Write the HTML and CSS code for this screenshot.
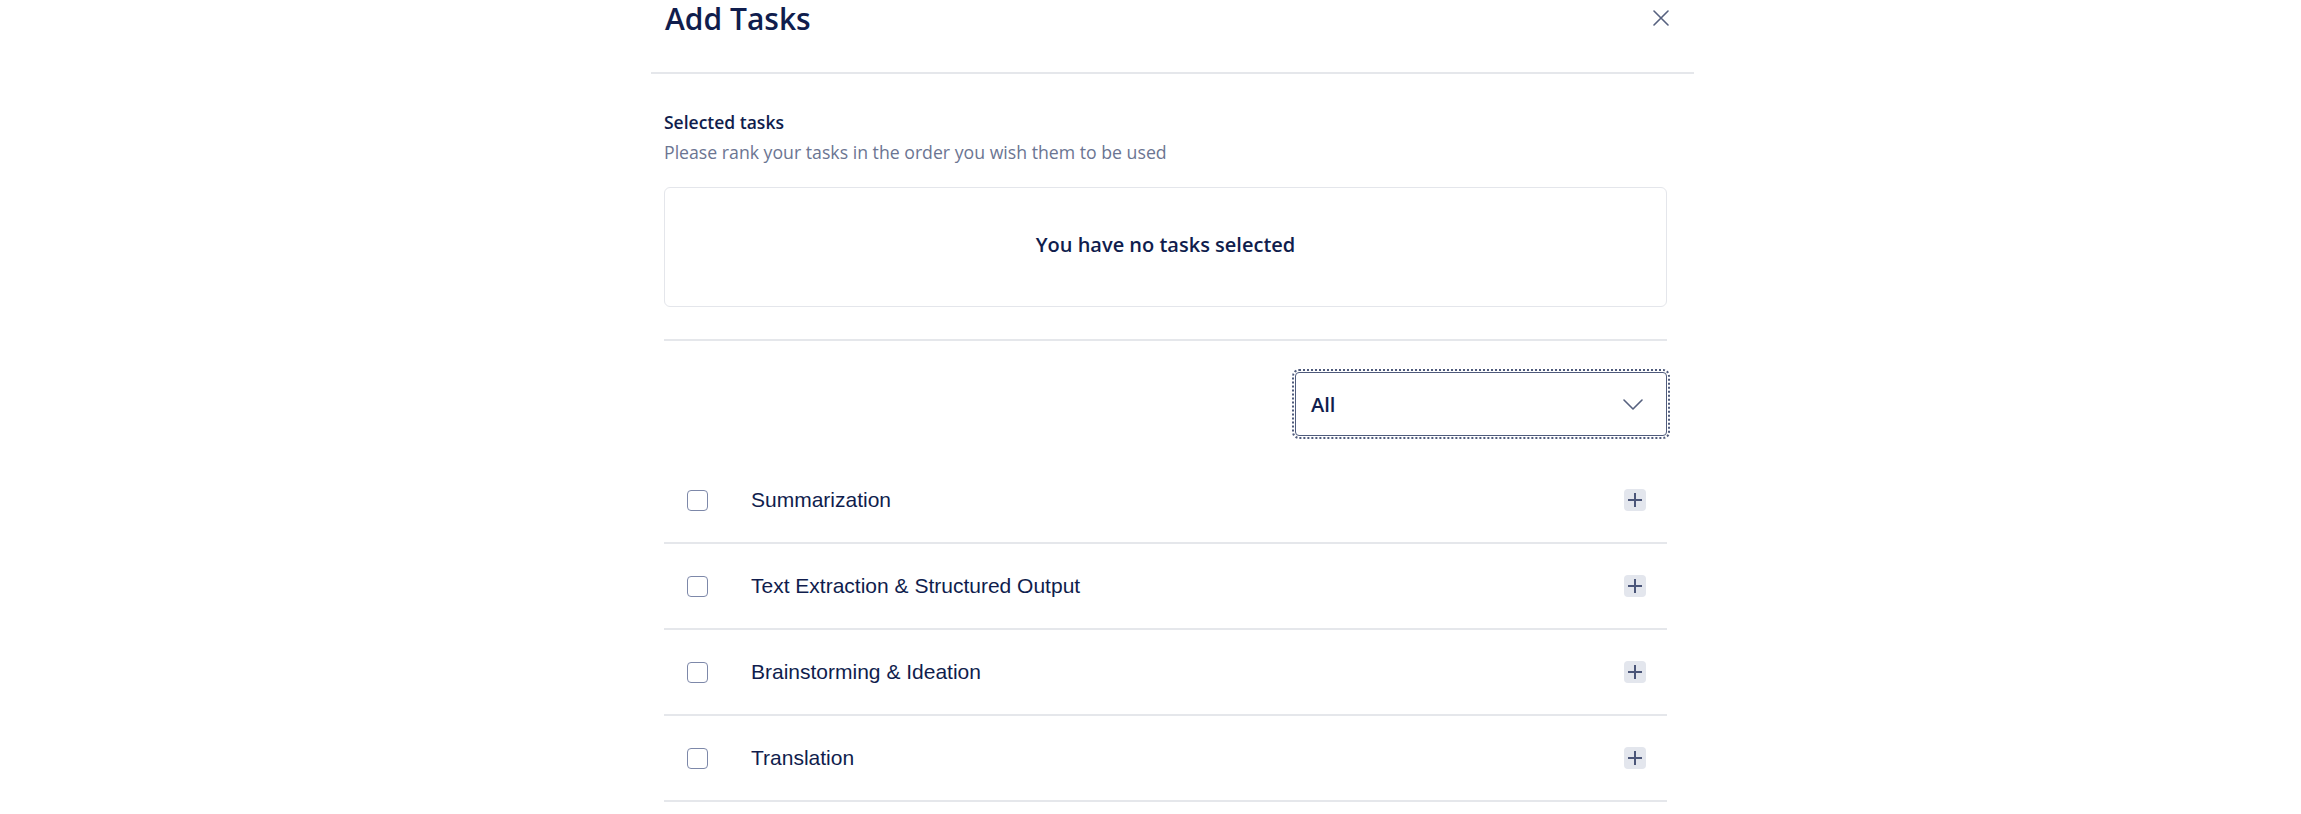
FILE: index.html
```html
<!DOCTYPE html>
<html lang="en">
<head>
    <meta charset="UTF-8">
    <meta name="viewport" content="width=device-width, initial-scale=1.0">
    <title>Add Tasks</title>
    <link rel="stylesheet" href="styles.css">
</head>
<body>
    <div class="modal">
        <div class="modal-header">
            <h1>Add Tasks</h1>
            <button class="close-btn" title="Close">
                <svg width="16" height="16" viewBox="0 0 16 16">
                    <path d="M1 1L15 15M15 1L1 15" stroke="#56617f" stroke-width="1.6" stroke-linecap="round"/>
                </svg>
            </button>
        </div>

        <div class="modal-body">
            <h2 class="section-title">Selected tasks</h2>
            <p class="section-hint">Please rank your tasks in the order you wish them to be used</p>

            <div class="selected-box">
                <span class="empty-text">You have no tasks selected</span>
            </div>

            <hr class="divider">

            <div class="filter-row">
                <div class="select" tabindex="0">
                    <span class="select-value">All</span>
                    <svg width="20" height="11" viewBox="0 0 20 11">
                        <path d="M1 1L10 10L19 1" fill="none" stroke="#56617f" stroke-width="1.6" stroke-linecap="round" stroke-linejoin="round"/>
                    </svg>
                </div>
            </div>

            <ul class="task-list">
                <li class="task-row">
                    <input type="checkbox" class="task-check">
                    <span class="task-name">Summarization</span>
                    <button class="add-btn" title="Add">
                        <svg width="16" height="16" viewBox="0 0 16 16"><path d="M8 1V15M1 8H15" stroke="#4b5679" stroke-width="2"/></svg>
                    </button>
                </li>
                <li class="task-row">
                    <input type="checkbox" class="task-check">
                    <span class="task-name">Text Extraction &amp; Structured Output</span>
                    <button class="add-btn" title="Add">
                        <svg width="16" height="16" viewBox="0 0 16 16"><path d="M8 1V15M1 8H15" stroke="#4b5679" stroke-width="2"/></svg>
                    </button>
                </li>
                <li class="task-row">
                    <input type="checkbox" class="task-check">
                    <span class="task-name">Brainstorming &amp; Ideation</span>
                    <button class="add-btn" title="Add">
                        <svg width="16" height="16" viewBox="0 0 16 16"><path d="M8 1V15M1 8H15" stroke="#4b5679" stroke-width="2"/></svg>
                    </button>
                </li>
                <li class="task-row">
                    <input type="checkbox" class="task-check">
                    <span class="task-name">Translation</span>
                    <button class="add-btn" title="Add">
                        <svg width="16" height="16" viewBox="0 0 16 16"><path d="M8 1V15M1 8H15" stroke="#4b5679" stroke-width="2"/></svg>
                    </button>
                </li>
            </ul>
        </div>
    </div>
</body>
</html>
```

FILE: styles.css
```css
* {
    margin: 0;
    padding: 0;
    box-sizing: border-box;
}

body {
    font-family: 'Open Sans', Lato, sans-serif;
    color: #101d4d;
    background: #fff;
}

.modal {
    width: 1043px;
    margin-left: 651px;
    background: #fff;
}

.modal-header {
    display: flex;
    justify-content: space-between;
    align-items: flex-start;
    height: 74px;
    padding: 1px 25px 0 14px;
    border-bottom: 2px solid #e5e7eb;
}

h1 {
    font-size: 30px;
    line-height: 36px;
    font-weight: 600;
}

.close-btn {
    margin-top: 9px;
    width: 16px;
    height: 16px;
    border: none;
    background: none;
    cursor: pointer;
    display: flex;
}

.modal-body {
    padding: 0 27px 0 13px;
}

.section-title {
    margin-top: 38px;
    font-size: 17.5px;
    line-height: 20px;
    font-weight: 600;
}

.section-hint {
    margin-top: 9px;
    font-size: 17.7px;
    line-height: 22px;
    color: #6b7592;
}

.selected-box {
    margin-top: 24px;
    height: 120px;
    border: 1px solid #e4e6eb;
    border-radius: 6px;
    display: flex;
    align-items: center;
    justify-content: center;
    padding-bottom: 5px;
}

.empty-text {
    font-size: 20px;
    line-height: 24px;
    font-weight: 600;
}

.divider {
    margin-top: 32px;
    border: none;
    border-top: 2px solid #e5e7eb;
}

.filter-row {
    display: flex;
    justify-content: flex-end;
    margin-top: 31px;
}

.select {
    width: 372px;
    height: 64px;
    border: 1px solid #4f5b7c;
    border-radius: 4px;
    outline: 2px dotted #4f5b7c;
    outline-offset: 1px;
    display: flex;
    align-items: center;
    justify-content: space-between;
    padding: 0 23px 0 15px;
}

.select-value {
    font-size: 20px;
    font-weight: 600;
}

.task-list {
    list-style: none;
    margin-top: 22px;
}

.task-row {
    display: flex;
    align-items: center;
    height: 86px;
    padding: 0 21px 0 23px;
    border-bottom: 2px solid #e5e7eb;
}

.task-check {
    appearance: none;
    -webkit-appearance: none;
    width: 21px;
    height: 21px;
    border: 1.5px solid #7d88a9;
    border-radius: 4px;
    background: #fff;
    flex-shrink: 0;
}

.task-name {
    flex: 1;
    margin-left: 43px;
    font-family: 'Liberation Sans', Arial, sans-serif;
    font-size: 21px;
}

.add-btn {
    width: 22px;
    height: 22px;
    border: none;
    border-radius: 4px;
    background: #e3e6ed;
    display: flex;
    align-items: center;
    justify-content: center;
    cursor: pointer;
}
```
